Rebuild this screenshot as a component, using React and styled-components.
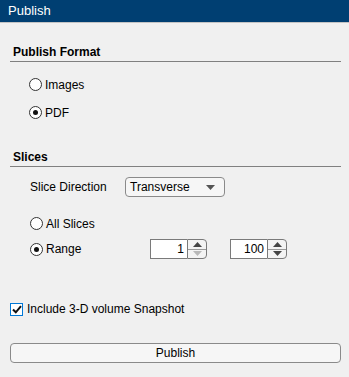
import React from "react";
import styled, { createGlobalStyle } from "styled-components";

const Global = createGlobalStyle`
  html, body { margin: 0; padding: 0; background: #f0f0f0; }
  body { font-family: "Liberation Sans", Arial, sans-serif; font-size: 12px; color: #000; }
  * { box-sizing: border-box; }
`;

const Page = styled.div`
  width: 349px;
  height: 377px;
  background: #f0f0f0;
  display: flex;
  flex-direction: column;
`;

const TitleBar = styled.div`
  height: 23px;
  background: #003f72;
  border-bottom: 1px solid #c4c4c4;
  color: #fff;
  font-size: 13px;
  line-height: 22px;
  padding-left: 8px;
`;

const Body = styled.div`
  display: flex;
  flex-direction: column;
  padding: 0 8px 0 10px;
`;

const Heading = styled.div`
  margin-top: ${(p) => p.$mt}px;
  height: 18px;
  padding: 0 0 1px 3px;
  display: flex;
  align-items: center;
  font-weight: bold;
  line-height: 14px;
  border-bottom: 1px solid #808080;
`;

const Row = styled.div`
  margin-top: ${(p) => p.$mt}px;
  margin-left: ${(p) => p.$indent || 0}px;
  height: ${(p) => p.$h || 15}px;
  display: flex;
  align-items: center;
  line-height: 14px;
`;

const RadioWrap = styled.label`
  display: flex;
  align-items: center;
  width: ${(p) => (p.$w ? `${p.$w}px` : "auto")};
`;

const RadioCircle = styled.span`
  width: 13px;
  height: 13px;
  border-radius: 50%;
  border: 1px solid #333;
  background: #fff;
  display: flex;
  align-items: center;
  justify-content: center;
  margin-right: 3px;
  flex: none;
  &::after {
    content: "";
    width: 5px;
    height: 5px;
    border-radius: 50%;
    background: #111;
    display: ${(p) => (p.$on ? "block" : "none")};
  }
`;

const Label = styled.span`
  width: ${(p) => (p.$w ? `${p.$w}px` : "auto")};
`;

const Dropdown = styled.div`
  width: 100px;
  height: 20px;
  border: 1px solid #8a8a8a;
  border-radius: 4px;
  background: #f6f6f6;
  display: flex;
  align-items: center;
  justify-content: space-between;
  padding: 0 9px 0 4px;
`;

const Spinners = styled.div`
  display: flex;
  gap: 23px;
`;

const Spinner = styled.div`
  width: 57px;
  height: 20px;
  display: flex;
`;

const SpinInput = styled.div`
  flex: 1;
  background: #fff;
  border: 1px solid #7a7a7a;
  border-right: none;
  text-align: right;
  padding-right: 3px;
  line-height: 18px;
`;

const SpinButtons = styled.div`
  width: 20px;
  border: 1px solid #7a7a7a;
  border-radius: 0 4px 4px 0;
  background: #f3f3f3;
  display: flex;
  flex-direction: column;
`;

const SpinBtn = styled.div`
  flex: 1;
  display: flex;
  align-items: center;
  justify-content: center;
  & + & { border-top: 1px solid #9a9a9a; }
`;

const CheckBox = styled.span`
  width: 13px;
  height: 13px;
  border: 1px solid #0078d7;
  background: #fff;
  display: flex;
  align-items: center;
  justify-content: center;
  margin-right: 4px;
`;

const Button = styled.div`
  margin-top: 27px;
  height: 20px;
  border: 1px solid #8a8a8a;
  border-radius: 4px;
  background: #f6f6f6;
  display: flex;
  align-items: center;
  justify-content: center;
  line-height: 14px;
`;

const Tri = ({ up, color }) => (
  <svg width="9" height="5" viewBox="0 0 9 5">
    <path d={up ? "M0 5 L4.5 0 L9 5 Z" : "M0 0 L9 0 L4.5 5 Z"} fill={color} />
  </svg>
);

const Radio = ({ on, label, w }) => (
  <RadioWrap $w={w}>
    <RadioCircle $on={on} />
    <span>{label}</span>
  </RadioWrap>
);

const Spin = ({ value, downColor }) => (
  <Spinner>
    <SpinInput>{value}</SpinInput>
    <SpinButtons>
      <SpinBtn><Tri up color="#444" /></SpinBtn>
      <SpinBtn><Tri color={downColor} /></SpinBtn>
    </SpinButtons>
  </Spinner>
);

export default function App() {
  return (
    <Page>
      <Global />
      <TitleBar>Publish</TitleBar>
      <Body>
        <Heading $mt={21}>Publish Format</Heading>
        <Row $mt={15} $indent={19}><Radio label="Images" /></Row>
        <Row $mt={13} $indent={19}><Radio on label="PDF" /></Row>
        <Heading $mt={29}>Slices</Heading>
        <Row $mt={10} $h={20} $indent={20}>
          <Label $w={95}>Slice Direction</Label>
          <Dropdown>
            <span>Transverse</span>
            <Tri color="#555" />
          </Dropdown>
        </Row>
        <Row $mt={19} $indent={20}><Radio label="All Slices" /></Row>
        <Row $mt={8} $h={20} $indent={20}>
          <Radio on label="Range" w={120} />
          <Spinners>
            <Spin value="1" downColor="#b8b8b8" />
            <Spin value="100" downColor="#444" />
          </Spinners>
        </Row>
        <Row $mt={43} $h={14}>
          <CheckBox>
            <svg width="10" height="9" viewBox="0 0 10 9">
              <path d="M1 4.5 L3.8 7.3 L9 1.2" stroke="#111" strokeWidth="2" fill="none" />
            </svg>
          </CheckBox>
          <span>Include 3-D volume Snapshot</span>
        </Row>
        <Button>Publish</Button>
      </Body>
    </Page>
  );
}
